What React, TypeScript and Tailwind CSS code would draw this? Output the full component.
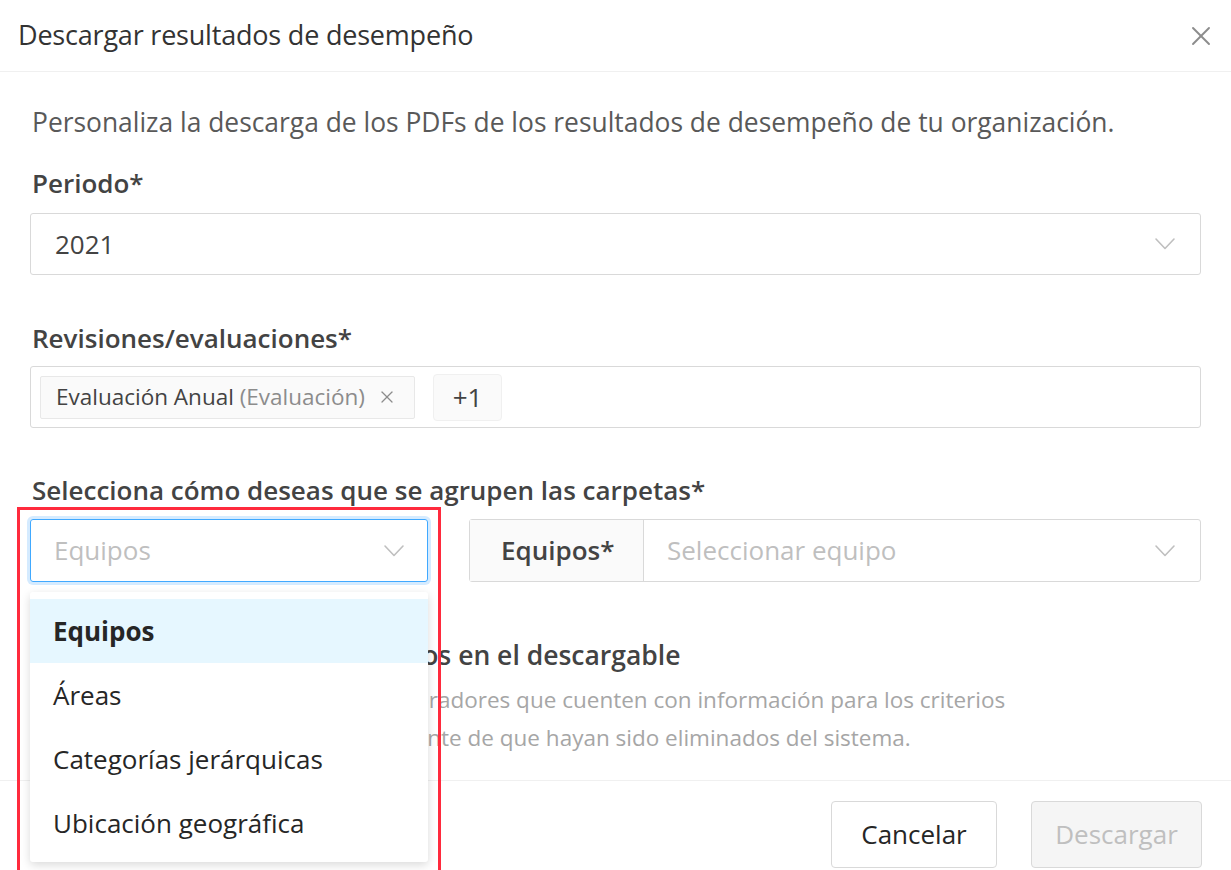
import React from 'react';
import { X } from 'lucide-react';

const Chevron: React.FC<{ className?: string }> = ({ className }) => (
  <svg width="22" height="14" viewBox="0 0 22 14" fill="none" className={className}>
    <path d="M2 2 L11 11.5 L20 2" stroke="#bfbfbf" strokeWidth="1.6" strokeLinecap="round" strokeLinejoin="round" />
  </svg>
);

const options = ['Equipos', 'Áreas', 'Categorías jerárquicas', 'Ubicación geográfica'];

const App: React.FC = () => {
  return (
    <div className="relative w-[1231px] h-[870px] overflow-hidden bg-white font-['Open_Sans',sans-serif] text-[#262626]">
      {/* Header */}
      <div className="flex items-center justify-between h-[72px] pl-[18px] pr-[14px] border-b border-[#f0f0f0]">
        <h2 className="text-[27px] font-medium text-[#333333] tracking-[-0.2px]">Descargar resultados de desempeño</h2>
        <button className="p-0">
          <X size={32} strokeWidth={1.4} className="text-[#8c8c8c]" />
        </button>
      </div>

      {/* Body */}
      <div className="px-[30px] pt-[32px] h-[708px]">
        <p className="text-[26.4px] leading-[36px] text-[#595959] pl-[2px]">
          Personaliza la descarga de los PDFs de los resultados de desempeño de tu organización.
        </p>

        <label className="block mt-[25px] text-[26px] leading-[36px] font-semibold text-[#434343] pl-[2px]">Periodo*</label>
        <div className="mt-[12px] flex items-center justify-between h-[62px] border border-[#d9d9d9] rounded-[3px] pl-[24px] pr-[24px]">
          <span className="text-[26px] text-[#434343]">2021</span>
          <Chevron />
        </div>

        <label className="block mt-[45px] text-[26px] leading-[36px] font-semibold text-[#434343] pl-[2px]">Revisiones/evaluaciones*</label>
        <div className="mt-[10px] flex items-center gap-[18px] h-[62px] border border-[#d9d9d9] rounded-[3px] pl-[9px]">
          <div className="flex items-center gap-[12px] h-[43px] pl-[15px] pr-[17px] bg-[#fafafa] border border-[#e8e8e8] rounded-[2px]">
            <span className="text-[22.5px] text-[#434343]">
              Evaluación Anual <span className="text-[#8c8c8c]">(Evaluación)</span>
            </span>
            <X size={20} strokeWidth={1.5} className="text-[#8c8c8c]" />
          </div>
          <div className="flex items-center justify-center w-[69px] h-[47px] bg-[#fafafa] border border-[#f0f0f0] rounded-[4px] text-[26px] text-[#434343]">
            +1
          </div>
        </div>

        <label className="block mt-[44px] text-[26px] leading-[36px] font-semibold text-[#434343] pl-[2px]">
          Selecciona cómo deseas que se agrupen las carpetas*
        </label>
        <div className="mt-[11px] flex gap-[41px] h-[63px]">
          <div className="flex items-center justify-between w-[398px] border border-[#40a9ff] rounded-[3px] shadow-[0_0_0_3px_rgba(24,144,255,0.18)] pl-[23px] pr-[22px]">
            <span className="text-[26px] text-[#bfbfbf]">Equipos</span>
            <Chevron />
          </div>
          <div className="flex flex-1 border border-[#d9d9d9] rounded-[3px]">
            <div className="flex items-center w-[174px] bg-[#fafafa] border-r border-[#d9d9d9] pl-[31px] text-[26px] font-semibold text-[#434343]">
              Equipos*
            </div>
            <div className="flex flex-1 items-center justify-between pl-[23px] pr-[24px]">
              <span className="text-[26px] text-[#bfbfbf]">Seleccionar equipo</span>
              <Chevron />
            </div>
          </div>
        </div>

        <div className="mt-[55px] pl-[2px]">
          <div className="text-[26.5px] leading-[36px] font-semibold text-[#434343]">Incluir colaboradores eliminados en el descargable</div>
          <p className="mt-[8px] text-[22.5px] leading-[38px] text-[#a6a6a6] whitespace-nowrap">
            Se incluirán los reportes de los colaboradores que cuenten con información para los criterios
            <br />
            seleccionados, esto independientemente de que hayan sido eliminados del sistema.
          </p>
        </div>
      </div>

      {/* Footer */}
      <div className="absolute left-0 right-0 top-[780px] border-t border-[#f0f0f0] flex justify-end gap-[34px] pt-[20px] pr-[29px]">
        <button className="w-[166px] h-[67px] border border-[#d9d9d9] rounded-[4px] bg-white text-[26px] text-[#262626]">
          Cancelar
        </button>
        <button className="w-[171px] h-[67px] border border-[#d9d9d9] rounded-[4px] bg-[#f5f5f5] text-[26px] text-[#bfbfbf]">
          Descargar
        </button>
      </div>

      {/* Dropdown menu */}
      <div className="absolute left-[30px] top-[592px] w-[398px] h-[270px] bg-white rounded-[3px] shadow-[0_3px_10px_rgba(0,0,0,0.15)] pt-[7px]">
        {options.map((o, i) => (
          <div
            key={o}
            className={
              i === 0
                ? 'flex items-center h-[64px] pl-[23px] bg-[#e6f7ff] text-[26px] font-bold text-[#262626]'
                : 'flex items-center h-[64px] pl-[23px] text-[26px] text-[#262626]'
            }
          >
            {o}
          </div>
        ))}
      </div>

      {/* Highlight box */}
      <div className="absolute left-[17px] top-[507px] w-[424px] h-[380px] border-[3px] border-[#ff2a3d] pointer-events-none" />
    </div>
  );
};

export default App;
